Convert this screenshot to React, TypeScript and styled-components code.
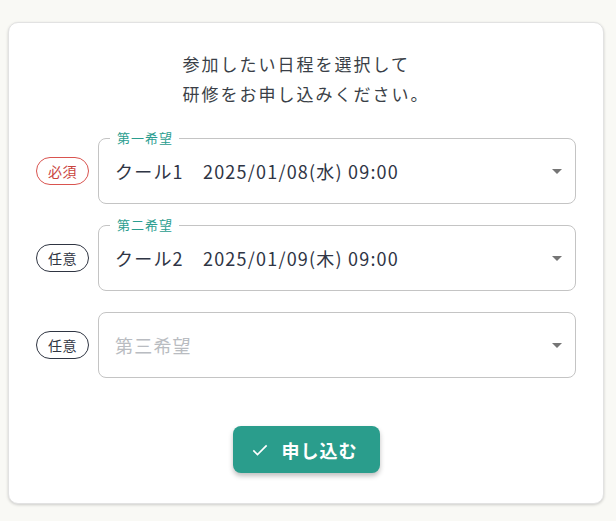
import React from 'react';
import styled, { createGlobalStyle } from 'styled-components';

const GlobalStyle = createGlobalStyle`
  body {
    margin: 0;
    background: #f9f9f5;
    font-family: "Noto Sans CJK JP", "Noto Sans", sans-serif;
    color: #333a45;
  }
`;

const Page = styled.div`
  padding: 22px 12px 17px 8px;
`;

const Card = styled.section`
  background: #fff;
  border: 1px solid #e2e2e2;
  border-radius: 10px;
  box-shadow: 0 1px 3px rgba(0, 0, 0, 0.18);
  padding: 26px 27px 30px 27px;
  display: flex;
  flex-direction: column;
  align-items: stretch;
`;

const Lead = styled.p`
  align-self: center;
  margin: 0 0 29px;
  text-align: left;
  font-size: 17px;
  line-height: 30px;
  letter-spacing: 2px;
  color: #3a3f47;
`;

const Rows = styled.div`
  display: flex;
  flex-direction: column;
  gap: 21px;
`;

const Row = styled.div`
  display: flex;
  align-items: center;
  gap: 9px;
`;

const Badge = styled.span<{ $required?: boolean }>`
  flex: none;
  width: 53px;
  height: 28px;
  box-sizing: border-box;
  border-radius: 14px;
  border: 1px solid ${(p) => (p.$required ? '#d9534f' : '#2f3542')};
  color: ${(p) => (p.$required ? '#c9443e' : '#2f3542')};
  font-size: 14px;
  letter-spacing: 0.5px;
  display: flex;
  align-items: center;
  justify-content: center;
`;

const Field = styled.div`
  position: relative;
  flex: 1;
  height: 66px;
  display: flex;
  align-items: center;
  padding: 0 40px 0 17px;
  box-sizing: border-box;
  cursor: pointer;
`;

// notched outline: the legend sits on the top border, so the fieldset is pulled up by half its height
const Outline = styled.fieldset`
  position: absolute;
  inset: -7px 0 0 0;
  margin: 0;
  padding: 0 11px;
  border: 1px solid #c4c4c4;
  border-radius: 8px;
  pointer-events: none;
  min-width: 0;
`;

const Legend = styled.legend<{ $empty?: boolean }>`
  height: 14px;
  padding: ${(p) => (p.$empty ? '0' : '0 6px 0 7px')};
  font-size: 13px;
  line-height: 14px;
  letter-spacing: 1px;
  white-space: nowrap;
  color: #2a9d8f;
`;

const Value = styled.span<{ $placeholder?: boolean }>`
  font-size: 18px;
  letter-spacing: 1.2px;
  color: ${(p) => (p.$placeholder ? '#b9bcc1' : '#2f3545')};
  white-space: pre;
`;

const Arrow = styled.svg`
  position: absolute;
  right: 7px;
  top: 50%;
  margin-top: -12px;
  width: 24px;
  height: 24px;
  fill: #757575;
`;

const Actions = styled.div`
  display: flex;
  justify-content: center;
  margin-top: 48px;
`;

const Submit = styled.button`
  display: flex;
  align-items: center;
  gap: 12px;
  height: 47px;
  padding: 0 22px 0 17px;
  border: none;
  border-radius: 8px;
  background: #2a9d8c;
  color: #fff;
  font-family: inherit;
  font-size: 18px;
  font-weight: 700;
  letter-spacing: 1px;
  box-shadow: 0 3px 5px rgba(0, 0, 0, 0.25);
  cursor: pointer;
`;

type Choice = {
  badge: string;
  required?: boolean;
  label: string;
  value?: string;
};

const choices: Choice[] = [
  { badge: '必須', required: true, label: '第一希望', value: 'クール1　2025/01/08(水) 09:00' },
  { badge: '任意', label: '第二希望', value: 'クール2　2025/01/09(木) 09:00' },
  { badge: '任意', label: '第三希望' },
];

function ChoiceRow({ badge, required, label, value }: Choice) {
  return (
    <Row>
      <Badge $required={required}>{badge}</Badge>
      <Field>
        {value ? <Value>{value}</Value> : <Value $placeholder>{label}</Value>}
        <Outline aria-hidden>
          {value ? <Legend>{label}</Legend> : <Legend $empty />}
        </Outline>
        <Arrow viewBox="0 0 24 24">
          <path d="M7 10l5 5 5-5z" />
        </Arrow>
      </Field>
    </Row>
  );
}

export default function App() {
  return (
    <Page>
      <GlobalStyle />
      <Card>
        <Lead>
          参加したい日程を選択して
          <br />
          研修をお申し込みください。
        </Lead>
        <Rows>
          {choices.map((c) => (
            <ChoiceRow key={c.label} {...c} />
          ))}
        </Rows>
        <Actions>
          <Submit type="button">
            <svg width="20" height="20" viewBox="0 0 24 24" fill="none" stroke="#fff" strokeWidth="2">
              <path d="M4 12.5l5 5L20 6.5" />
            </svg>
            申し込む
          </Submit>
        </Actions>
      </Card>
    </Page>
  );
}
